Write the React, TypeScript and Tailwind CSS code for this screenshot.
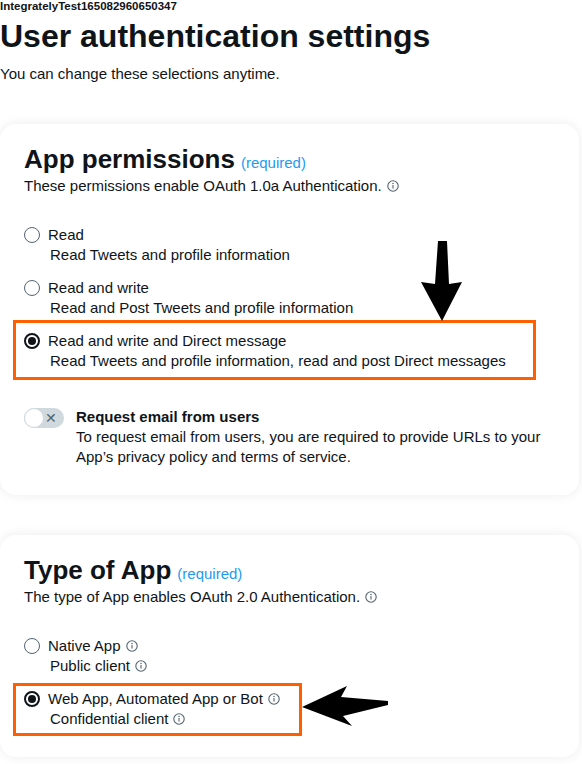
import React from "react";

const Info = () => (
  <svg width="12" height="12" viewBox="0 0 12 12" className="inline-block ml-[5px] align-[-1px]">
    <circle cx="6" cy="6" r="5.2" fill="none" stroke="#536471" strokeWidth="1.1" />
    <rect x="5.45" y="5" width="1.1" height="3.6" fill="#536471" />
    <circle cx="6" cy="3.5" r="0.75" fill="#536471" />
  </svg>
);

const Radio = ({ checked }: { checked?: boolean }) =>
  checked ? (
    <span className="w-4 h-4 rounded-full border-2 border-[#0f1419] flex items-center justify-center shrink-0">
      <span className="w-2 h-2 rounded-full bg-[#0f1419]" />
    </span>
  ) : (
    <span className="w-4 h-4 rounded-full border-[1.5px] border-[#536471] shrink-0" />
  );

const Option = ({
  checked,
  label,
  desc,
  labelInfo,
  descInfo,
  box,
}: {
  checked?: boolean;
  label: string;
  desc: string;
  labelInfo?: boolean;
  descInfo?: boolean;
  box?: string;
}) => (
  <div className="relative">
    {box && <div className={`absolute border-[3px] border-[#fe5f00] ${box}`} />}
    <div className="flex items-center gap-2 h-5">
      <Radio checked={checked} />
      <span className="text-[15px] leading-5">
        {label}
        {labelInfo && <Info />}
      </span>
    </div>
    <div className="text-[15px] leading-5 ml-[26px]">
      {desc}
      {descInfo && <Info />}
    </div>
  </div>
);

export default function App() {
  return (
    <div
      className="relative w-[582px] h-[764px] overflow-hidden bg-white text-[#0f1419]"
      style={{ fontFamily: '"Liberation Sans", Arial, sans-serif' }}
    >
      <div className="text-[11.5px] font-bold leading-[12px]">IntegratelyTest165082960650347</div>
      <h1 className="text-[32px] font-bold leading-[38px] mt-[5px]">User authentication settings</h1>
      <p className="text-[15px] leading-5 mt-[9px]">You can change these selections anytime.</p>

      <section className="mt-10 w-[579px] rounded-[16px] bg-white shadow-[0_0_12px_rgba(0,0,0,0.08)] pl-6 pr-6 pt-[22px] pb-[28px]">
        <h2 className="text-[26px] font-bold leading-[27px]">
          App permissions
          <span className="text-[15px] font-normal text-[#1d9bf0] ml-[6px]">(required)</span>
        </h2>
        <p className="text-[15px] leading-5">
          These permissions enable OAuth 1.0a Authentication.
          <Info />
        </p>
        <div className="mt-[29px] flex flex-col gap-[13px]">
          <Option label="Read" desc="Read Tweets and profile information" />
          <Option label="Read and write" desc="Read and Post Tweets and profile information" />
          <Option
            checked
            label="Read and write and Direct message"
            desc="Read Tweets and profile information, read and post Direct messages"
            box="-left-[11px] -top-[11px] w-[523px] h-[60px]"
          />
        </div>
        <div className="mt-[36px] flex gap-3">
          <div className="relative w-10 h-5 rounded-full bg-[#cfd9de] shrink-0 mt-[1px]">
            <span className="absolute left-0 top-0 w-5 h-5 rounded-full bg-white border border-[#cfd9de]" />
            <span className="absolute right-[7px] top-[1px] text-[14px] leading-[18px] text-[#536471]">✕</span>
          </div>
          <div>
            <div className="text-[15px] font-bold leading-5">Request email from users</div>
            <div className="text-[15px] leading-5">
              To request email from users, you are required to provide URLs to your
              <br />
              App’s privacy policy and terms of service.
            </div>
          </div>
        </div>
      </section>

      <section className="mt-10 w-[579px] rounded-[16px] bg-white shadow-[0_0_12px_rgba(0,0,0,0.08)] pl-6 pr-6 pt-[22px] pb-7">
        <h2 className="text-[26px] font-bold leading-[27px]">
          Type of App
          <span className="text-[15px] font-normal text-[#1d9bf0] ml-[6px]">(required)</span>
        </h2>
        <p className="text-[15px] leading-5">
          The type of App enables OAuth 2.0 Authentication.
          <Info />
        </p>
        <div className="mt-[29px] flex flex-col gap-[13px]">
          <Option label="Native App" desc="Public client" labelInfo descInfo />
          <Option
            checked
            label="Web App, Automated App or Bot"
            desc="Confidential client"
            labelInfo
            descInfo
            box="-left-[11px] -top-[6px] w-[289px] h-[53px]"
          />
        </div>
      </section>

      <svg className="absolute left-0 top-0 pointer-events-none" width="582" height="764">
        <polygon points="438,241 447,241 449,284 462,282 442,321 421,282 435,284" fill="#000" />
        <polygon points="302,707 347,686 341,697 388,701 388,705 343,716 352,726" fill="#000" />
      </svg>
    </div>
  );
}
